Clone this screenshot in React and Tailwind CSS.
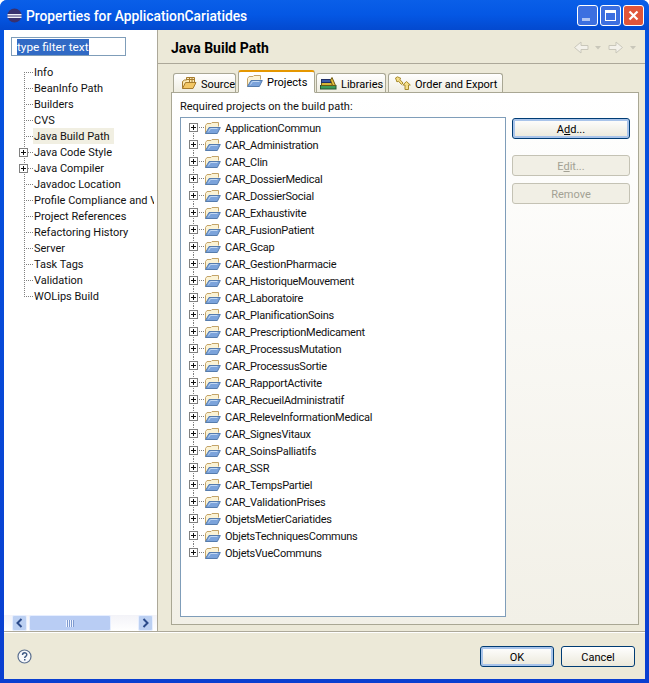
const left = [
  ["Info"], ["BeanInfo Path"], ["Builders"], ["CVS"], ["Java Build Path", 0, 1], ["Java Code Style", 1], ["Java Compiler", 1],
  ["Javadoc Location"], ["Profile Compliance and Va"], ["Project References"], ["Refactoring History"], ["Server"], ["Task Tags"], ["Validation"], ["WOLips Build"],
];
const projects = ["ApplicationCommun","CAR_Administration","CAR_Clin","CAR_DossierMedical","CAR_DossierSocial","CAR_Exhaustivite","CAR_FusionPatient","CAR_Gcap","CAR_GestionPharmacie","CAR_HistoriqueMouvement","CAR_Laboratoire","CAR_PlanificationSoins","CAR_PrescriptionMedicament","CAR_ProcessusMutation","CAR_ProcessusSortie","CAR_RapportActivite","CAR_RecueilAdministratif","CAR_ReleveInformationMedical","CAR_SignesVitaux","CAR_SoinsPalliatifs","CAR_SSR","CAR_TempsPartiel","CAR_ValidationPrises","ObjetsMetierCariatides","ObjetsTechniquesCommuns","ObjetsVueCommuns"];

function Plus() {
  return (
    <g>
      <rect x="0.5" y="0.5" width="8" height="8" fill="#fff" stroke="#808080" />
      <path d="M2 4.500h5M4.500 2v5" stroke="#111" />
    </g>
  );
}

function Connector({ w, h, vx, hEnd, plus, first, last, plusX }) {
  const mid = Math.floor(h / 2);
  return (
    <svg width={w} height={h} className="shrink-0 block">
      <path d={`M${vx + 0.5} ${first ? mid : 0}V${last ? mid : h}`} stroke="#808080" strokeDasharray="1 1" />
      <path d={`M${vx} ${mid + 0.5}H${hEnd}`} stroke="#808080" strokeDasharray="1 1" />
      {plus && <g transform={`translate(${plusX} ${mid - 4})`}><Plus /></g>}
    </svg>
  );
}

function FolderOpen() {
  return (
    <svg width="17" height="14" viewBox="0 0 17 14" className="shrink-0 block">
      <path d="M1.500 12.500V4.500L3 2.500h4L8 1.500h6.500v4" fill="#fbf3d6" stroke="#c4a468" />
      <path d="M1.500 12.500l3.500-6h11.300l-3 6z" fill="#7ba3db" stroke="#557cae" />
      <path d="M4.500 10.500l2-3h7" fill="none" stroke="#c2d8f3" />
    </svg>
  );
}

function SourceIcon() {
  return (
    <svg width="16" height="14" viewBox="0 0 16 14" className="shrink-0 block">
      <path d="M1.500 12.500V5.500l2-1.500h2V1.500h8V6" fill="#fbe9b4" stroke="#a67c2e" />
      <path d="M1.500 12.500l3-6h10.500l-3 6z" fill="#f3c765" stroke="#a67c2e" />
      <path d="M8.500 1.500V6M11 1.500V6M5.500 3.500h8" stroke="#a67c2e" fill="none" />
    </svg>
  );
}

function LibrariesIcon() {
  return (
    <svg width="17" height="14" viewBox="0 0 17 14" className="shrink-0 block">
      <rect x="0.500" y="9.500" width="15.500" height="3.500" fill="#3d9b5a" stroke="#24552f" />
      <rect x="1.500" y="6.500" width="11" height="3" fill="#d8b535" stroke="#6b5a14" />
      <rect x="1.500" y="3.500" width="9" height="3" fill="#3a5aa8" stroke="#1f2f66" />
      <path d="M12 1.500l3.500 8h-3L10.500 4z" fill="#e8c040" stroke="#6b5a14" />
    </svg>
  );
}

function OrderIcon() {
  return (
    <svg width="17" height="15" viewBox="0 0 17 15" className="shrink-0 block">
      <path d="M3.500 0.800L7 2.500 5.800 3.500 9 7 7.500 8.500 4.300 5 3 6 1.500 2z" fill="#f6e08a" stroke="#a68a2e" strokeLinejoin="round" />
      <path d="M12.500 5.500l3.800 3.500H14.500v4.500h-3.500V9H8.800z" fill="#f6e08a" stroke="#a68a2e" strokeLinejoin="round" />
    </svg>
  );
}

function NavArrow({ right }) {
  return (
    <div className="flex items-center gap-[6px]">
      <svg width="16" height="13" viewBox="0 0 16 13" className={right ? "block" : "block -scale-x-100"}>
        <path d="M1 4.500h7V1l6.500 5.500L8 12V8.500H1z" fill="#f3f1ea" stroke="#c9c7ba" />
      </svg>
      <svg width="6" height="4" viewBox="0 0 6 4" className="block"><path d="M0 0h6L3 3.500z" fill="#c9c7ba" /></svg>
    </div>
  );
}

function CaptionButton({ children, cls }) {
  return (
    <div className={`w-[21px] h-[21px] rounded-[3px] border border-white flex items-center justify-center ${cls}`}>
      {children}
    </div>
  );
}

function Btn({ children, disabled, strong, w }) {
  const border = strong ? "border-[#003c74] shadow-[inset_0_0_0_2px_#a9c4ea]" : disabled ? "border-[#c4c2b4]" : "border-[#003c74]";
  const tx = disabled ? "text-[#a3a194]" : "text-black";
  const bg = disabled ? "bg-[#f1efe5]" : "bg-gradient-to-b from-white to-[#ebe8da]";
  return (
    <div className={`${w} h-[21px] pt-[2px] rounded-[3px] border ${border} ${bg} ${tx} flex items-center justify-center text-[11px] leading-none`}>
      {children}
    </div>
  );
}

function Tab({ icon, label, active, w, pl }) {
  return (
    <div className={`${w} ${pl} flex items-center gap-[4px] rounded-t-[3px] border ${active ? "h-[23px] bg-white border-[#a9a794] border-b-white border-t-[#e59700] border-t-2 -mb-px z-10 pb-[2px]" : "h-[19px] border-b-0 bg-gradient-to-b from-white to-[#efede1] border-[#a9a794]"} text-[11px] text-black`}>
      {icon}
      <span className="whitespace-nowrap leading-none pt-[3px]">{label}</span>
    </div>
  );
}

function ScrollArrow({ right }) {
  return (
    <div className="w-[15px] h-[16px] bg-[#bcd0f2] border border-[#e6eeff] rounded-[2px] flex items-center justify-center">
      <svg width="9" height="10" viewBox="0 0 9 10" className="block">
        <path d={right ? "M2.500 1l4 4-4 4" : "M6.500 1l-4 4 4 4"} fill="none" stroke="#2b4a8a" strokeWidth="2" />
      </svg>
    </div>
  );
}

export default function App() {
  return (
    <div className="font-['Roboto',sans-serif] w-[649px] h-[683px] flex flex-col rounded-t-[7px] overflow-hidden bg-gradient-to-b from-[#0554e0] to-[#0a3fd0] text-[11px] text-[#111]">
      {/* title bar */}
      <div className="h-[30px] shrink-0 flex items-center pl-[7px] pr-[5px] bg-gradient-to-b from-[#0a5fe8] via-[#0457e4] to-[#0349cf]">
        <svg width="15" height="15" viewBox="0 0 15 15" className="block shrink-0">
          <circle cx="7.500" cy="7.500" r="7" fill="#39306e" />
          <path d="M0.500 6h14v1.500H0.500zM0.500 8.500h14V10H0.500z" fill="#f0eef8" />
        </svg>
        <span className="ml-[4px] pt-[3px] text-white text-[13.8px] font-medium whitespace-nowrap leading-none">Properties for ApplicationCariatides</span>
        <div className="ml-auto flex gap-[2px]">
          <CaptionButton cls="bg-[#3c6fe0]">
            <div className="w-[8px] h-[3px] bg-white mt-[8px] -ml-[3px] opacity-60" />
          </CaptionButton>
          <CaptionButton cls="bg-[#3c6fe0]">
            <div className="w-[11px] h-[11px] border border-white border-t-[3px]" />
          </CaptionButton>
          <CaptionButton cls="bg-[#e0553a]">
            <svg width="11" height="11" viewBox="0 0 11 11" className="block"><path d="M1.500 1.500l8 8M9.500 1.500l-8 8" stroke="#fff" strokeWidth="2.200" /></svg>
          </CaptionButton>
        </div>
      </div>

      {/* client */}
      <div className="flex-1 min-h-0 mx-[4px] mb-[4px] flex flex-col bg-[#ece9d8]">
        <div className="h-[602px] shrink-0 flex border-b border-[#aca899]">
          {/* left */}
          <div className="w-[154px] shrink-0 bg-white flex flex-col border-r border-[#aca899]">
            <div className="pl-[7px] pt-[7px] h-[34px] shrink-0">
              <div className="w-[115px] h-[19px] border border-[#7f9db9] flex items-center pl-[5px]">
                <span className="bg-[#316ac5] text-white leading-[15px] pt-[1px] text-[11.8px] whitespace-nowrap">type filter text</span>
              </div>
            </div>
            <div className="flex-1 flex flex-col">
              {left.map(([t, plus, sel], i) => (
                <div key={t} className="h-[16px] flex items-center">
                  <Connector w={29} h={16} vx={20} hEnd={29} plus={plus} plusX={15} first={i === 0} last={i === left.length - 1} />
                  <span className={`h-[16px] whitespace-nowrap overflow-hidden max-w-[121px] px-[1px] leading-[18px] text-[11px] ${sel ? "bg-[#f1efe2] pr-[4px]" : ""}`}>{t}</span>
                </div>
              ))}
            </div>
            <div className="h-[16px] flex items-center pl-[8px] pr-[4px] bg-gradient-to-b from-[#f3f3f8] to-white">
              <ScrollArrow />
              <div className="ml-[2px] w-[82px] h-[16px] bg-[#b9cdf4] border border-[#e6eeff] rounded-[2px] flex items-center justify-center">
                <div className="w-[8px] h-[7px] bg-[repeating-linear-gradient(90deg,#eef3ff_0,#eef3ff_1px,#7f9bd0_1px,#7f9bd0_2px)]" />
              </div>
              <div className="flex-1" />
              <ScrollArrow right />
            </div>
          </div>

          {/* right */}
          <div className="flex-1 flex flex-col min-w-0">
            <div className="h-[34px] shrink-0 border-b border-[#aca899] flex items-center pl-[13px] pr-[3px] pt-[2px]">
              <span className="text-[14px] font-bold text-black whitespace-nowrap leading-none">Java Build Path</span>
              <div className="ml-auto flex gap-[7px] pr-[6px]">
                <NavArrow />
                <NavArrow right />
              </div>
            </div>
            <div className="flex-1 min-h-0 pl-[13px] pr-[6px] pt-[7px] pb-[6px] flex flex-col">
              <div className="h-[21px] shrink-0 flex items-end pl-[2px]">
                <Tab w="w-[63px]" pl="pl-[7px]" icon={<SourceIcon />} label="Source" />
                <div className="w-[2px]" />
                <Tab w="w-[77px]" pl="pl-[7px]" active icon={<FolderOpen />} label="Projects" />
                <div className="w-px" />
                <Tab w="w-[70px]" pl="pl-[3px]" icon={<LibrariesIcon />} label="Libraries" />
                <div className="w-[2px]" />
                <Tab w="w-[115px]" pl="pl-[5px]" icon={<OrderIcon />} label="Order and Export" />
              </div>
              <div className="flex-1 min-h-0 border border-[#a9a794] bg-gradient-to-b from-white to-[#f2f0e7] pl-[8px] pt-[7px] pr-[7px] pb-[7px] flex flex-col">
                <div className="h-[13px] leading-[13px] text-[11px] shrink-0 whitespace-nowrap">Required projects on the build path:</div>
                <div className="flex-1 min-h-0 mt-[4px] flex gap-[6px]">
                  <div className="w-[326px] h-full bg-white border border-[#7f9db9] pt-[1px] pl-[7px]">
                    {projects.map((p, i) => (
                      <div key={p} className="h-[17px] flex items-center">
                        <Connector w={16} h={17} vx={5} hEnd={16} plus plusX={1} first={i === 0} last={i === projects.length - 1} />
                        <FolderOpen />
                        <span className="ml-[4px] pt-[2px] whitespace-nowrap text-[11px] leading-none tracking-[-0.25px]">{p}</span>
                      </div>
                    ))}
                  </div>
                  <div className="w-[118px] pt-[1px] flex flex-col">
                    <Btn w="w-[118px]" strong><span>A<u>d</u>d...</span></Btn>
                    <div className="h-[16px]" />
                    <Btn w="w-[118px]" disabled><span>E<u>d</u>it...</span></Btn>
                    <div className="h-[7px]" />
                    <Btn w="w-[118px]" disabled>Remove</Btn>
                  </div>
                </div>
              </div>
            </div>
          </div>
        </div>

        {/* bottom */}
        <div className="flex-1 flex items-center pl-[13px] pr-[10px] border-t border-white">
          <svg width="15" height="15" viewBox="0 0 15 15" className="block shrink-0">
            <circle cx="7.500" cy="7.500" r="6.500" fill="#f7f8fb" stroke="#5a6f8f" strokeWidth="1.200" />
            <path d="M5.500 6c0-3 4.300-2.800 4.300-.3 0 1.600-2.100 1.700-2.100 3.300" fill="none" stroke="#3f5a85" strokeWidth="1.400" />
            <rect x="7" y="10" width="1.500" height="1.500" fill="#3f5a85" />
          </svg>
          <div className="ml-auto flex gap-[7px]">
            <Btn w="w-[74px]" strong>OK</Btn>
            <Btn w="w-[74px]">Cancel</Btn>
          </div>
        </div>
      </div>
    </div>
  );
}
